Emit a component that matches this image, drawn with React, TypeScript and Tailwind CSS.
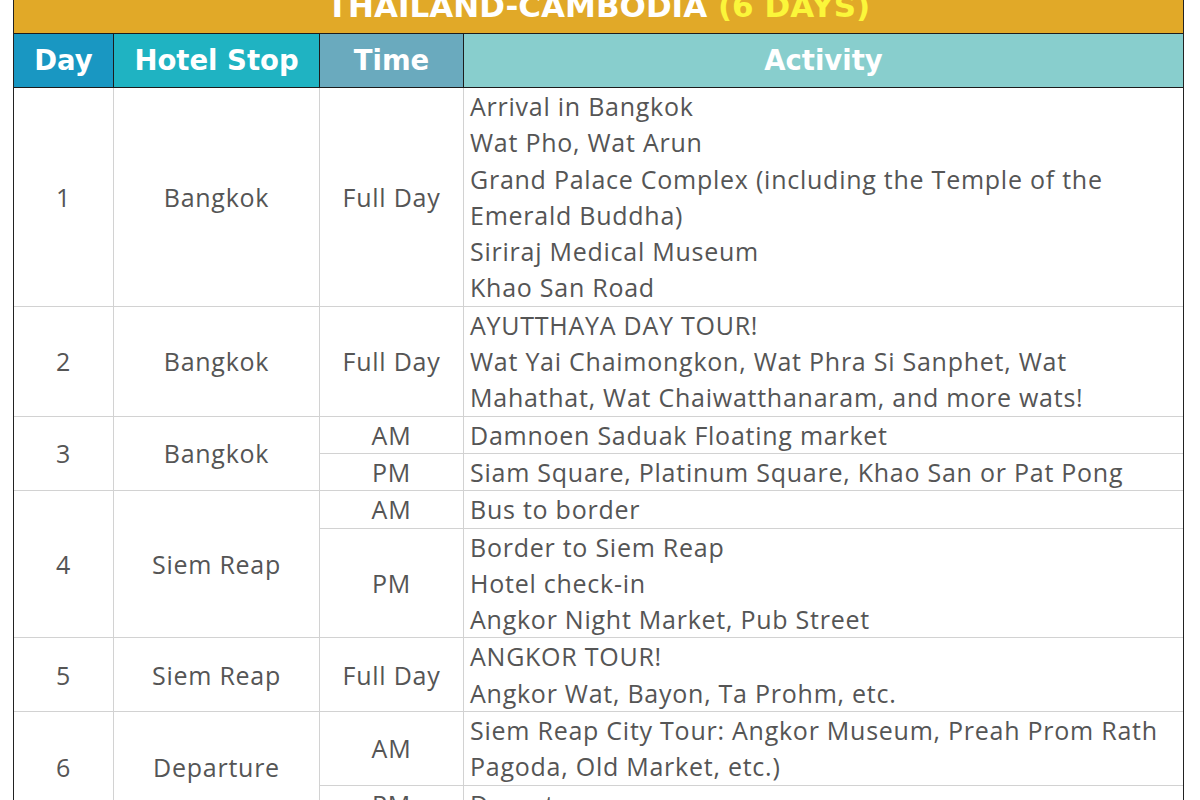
const body = "font-['Open_Sans',sans-serif] text-[25px] leading-[36.3px] tracking-[0.75px] text-[#555]";

type Sub = { time?: string; lines: string[] };
type Day = { day: string; stop: string; subs: Sub[] };

const days: Day[] = [
  {
    day: "1",
    stop: "Bangkok",
    subs: [
      {
        time: "Full Day",
        lines: [
          "Arrival in Bangkok",
          "Wat Pho, Wat Arun",
          "Grand Palace Complex (including the Temple of the",
          "Emerald Buddha)",
          "Siriraj Medical Museum",
          "Khao San Road",
        ],
      },
    ],
  },
  {
    day: "2",
    stop: "Bangkok",
    subs: [
      {
        time: "Full Day",
        lines: [
          "AYUTTHAYA DAY TOUR!",
          "Wat Yai Chaimongkon, Wat Phra Si Sanphet, Wat",
          "Mahathat, Wat Chaiwatthanaram, and more wats!",
        ],
      },
    ],
  },
  {
    day: "3",
    stop: "Bangkok",
    subs: [
      { time: "AM", lines: ["Damnoen Saduak Floating market"] },
      { time: "PM", lines: ["Siam Square, Platinum Square, Khao San or Pat Pong"] },
    ],
  },
  {
    day: "4",
    stop: "Siem Reap",
    subs: [
      { time: "AM", lines: ["Bus to border"] },
      {
        time: "PM",
        lines: ["Border to Siem Reap", "Hotel check-in", "Angkor Night Market, Pub Street"],
      },
    ],
  },
  {
    day: "5",
    stop: "Siem Reap",
    subs: [{ time: "Full Day", lines: ["ANGKOR TOUR!", "Angkor Wat, Bayon, Ta Prohm, etc."] }],
  },
  {
    day: "6",
    stop: "Departure",
    subs: [
      {
        time: "AM",
        lines: ["Siem Reap City Tour: Angkor Museum, Preah Prom Rath", "Pagoda, Old Market, etc.)"],
      },
      { time: "PM", lines: ["Departure"] },
    ],
  },
];

const cell = "border-r border-b border-[#d2d2d2] p-0 align-middle";
const head =
  "border-r border-b border-[#1c1c1c] h-[54px] p-0 text-center text-white font-['DejaVu_Sans',sans-serif] font-bold text-[27.5px]";

export default function App() {
  return (
    <div className="w-[1200px] h-[800px] overflow-hidden bg-white">
      <div className="ml-[13px] w-[1171px] border-x border-[#222]">
        <table className="w-full table-fixed border-separate border-spacing-0">
          <colgroup>
            <col className="w-[100px]" />
            <col className="w-[206px]" />
            <col className="w-[144px]" />
            <col />
          </colgroup>
          <thead>
            <tr>
              <th
                colSpan={4}
                className="h-[34px] p-0 bg-[#e1a928] border-b border-[#1c1c1c] overflow-hidden"
              >
                <div className="-mt-[21px] leading-[32px] text-center text-white font-['DejaVu_Sans',sans-serif] font-bold text-[31px]">
                  THAILAND-CAMBODIA <span className="text-[#fbf63a]">(6 DAYS)</span>
                </div>
              </th>
            </tr>
            <tr>
              <th className={`${head} bg-[#1997c2]`}>Day</th>
              <th className={`${head} bg-[#1fb3c2]`}>Hotel Stop</th>
              <th className={`${head} bg-[#6aaabe]`}>Time</th>
              <th className={`${head} bg-[#88cecd] border-r-0`}>Activity</th>
            </tr>
          </thead>
          <tbody className={body}>
            {days.map((d) =>
              d.subs.map((s, i) => (
                <tr key={d.day + i}>
                  {i === 0 && (
                    <>
                      <td rowSpan={d.subs.length} className={`${cell} text-center`}>
                        {d.day}
                      </td>
                      <td rowSpan={d.subs.length} className={`${cell} text-center`}>
                        {d.stop}
                      </td>
                    </>
                  )}
                  <td className={`${cell} text-center`}>{s.time}</td>
                  <td className={`${cell} border-r-0 pl-[6px]`}>
                    {s.lines.map((l) => (
                      <div key={l} className="whitespace-nowrap">
                        {l}
                      </div>
                    ))}
                  </td>
                </tr>
              ))
            )}
          </tbody>
        </table>
      </div>
    </div>
  );
}
